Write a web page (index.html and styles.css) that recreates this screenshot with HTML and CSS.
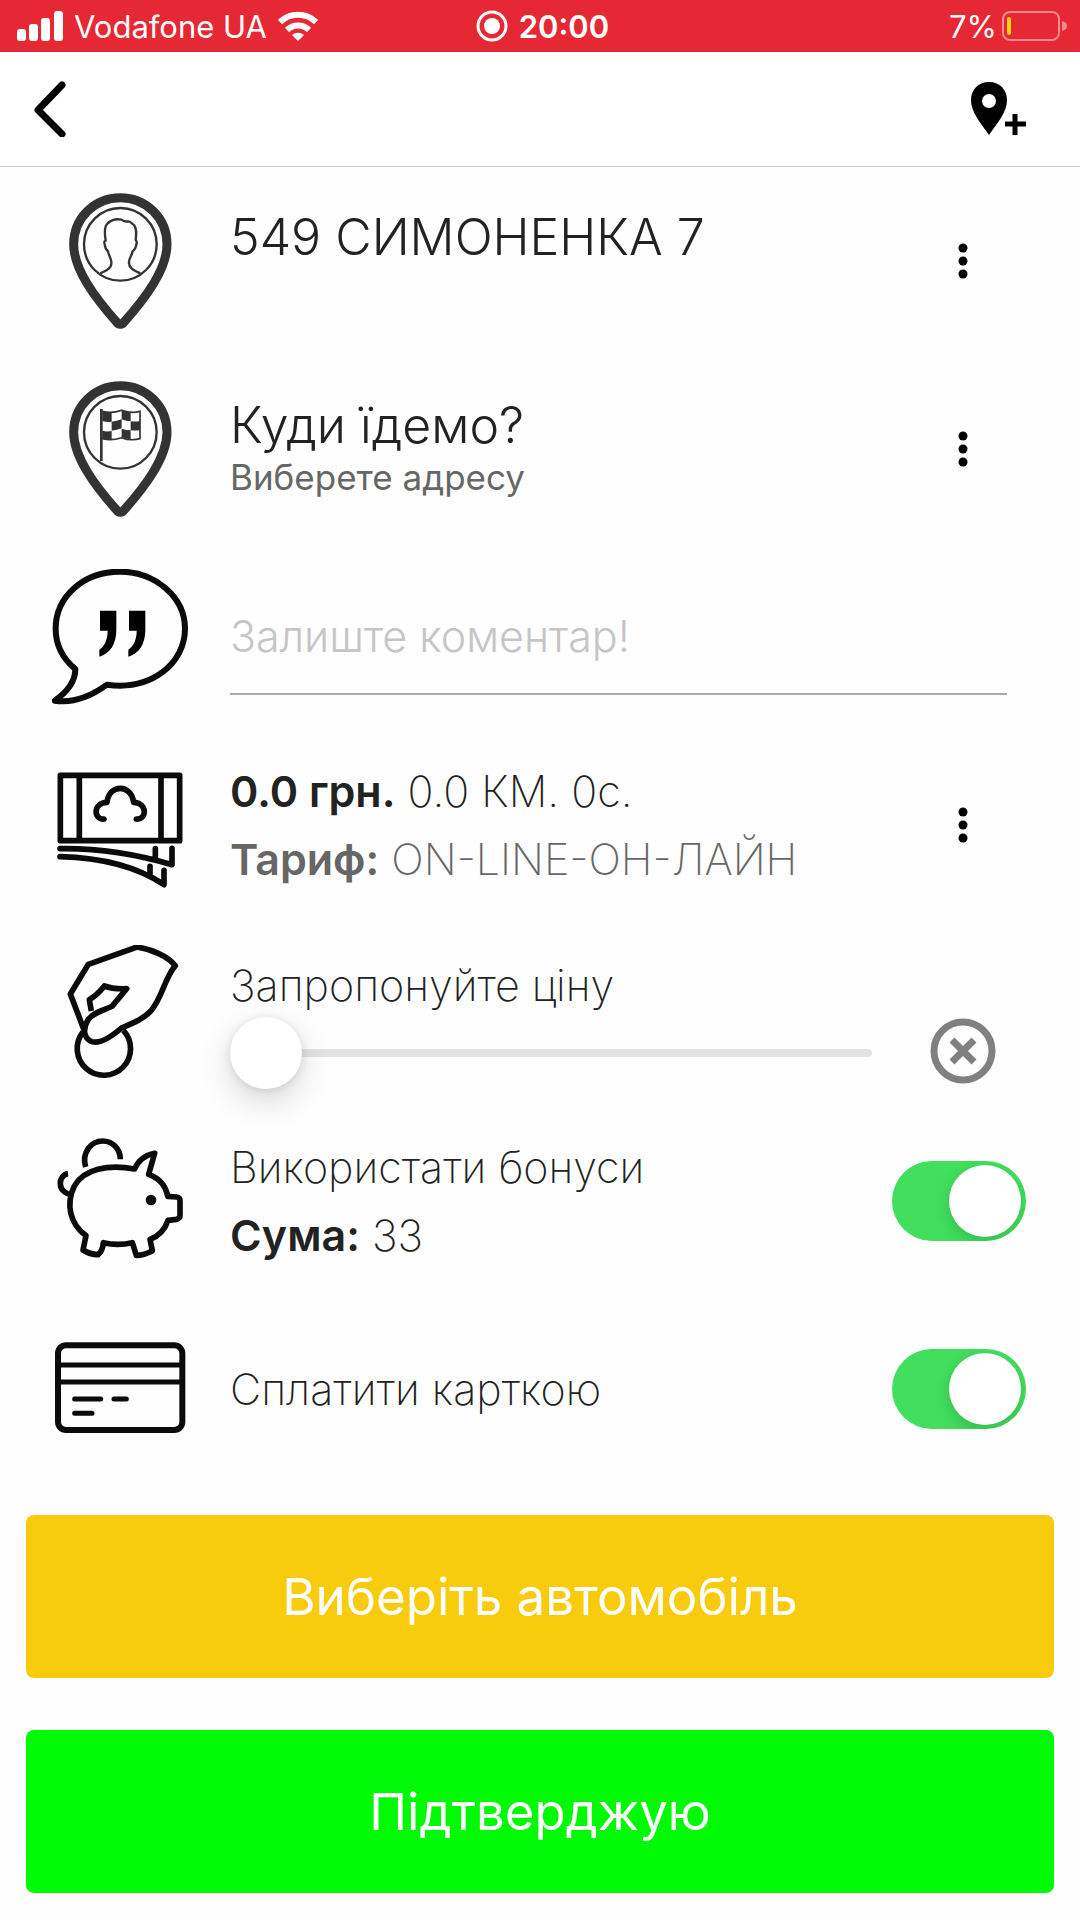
FILE: index.html
```html
<!DOCTYPE html>
<html lang="uk">
<head>
    <meta charset="UTF-8">
    <meta name="viewport" content="width=device-width, initial-scale=1.0">
    <title>Замовлення таксі</title>
    <link rel="stylesheet" href="styles.css">
</head>
<body>

<div class="status-bar">
    <div class="status-left">
        <svg class="signal" viewBox="0 0 46 30" width="46" height="30" fill="#fff">
            <rect x="0" y="18" width="9" height="12" rx="3"/>
            <rect x="12" y="13" width="9" height="17" rx="3"/>
            <rect x="24" y="7" width="9" height="23" rx="3"/>
            <rect x="37" y="0" width="9" height="30" rx="3"/>
        </svg>
        <span>Vodafone UA</span>
        <svg viewBox="0 0 40 30" width="40" height="30" fill="none" stroke="#fff" stroke-width="6">
            <path d="M2 11a26 26 0 0 1 36 0"/>
            <path d="M9 19a16 16 0 0 1 22 0"/>
            <path d="M20 30l-6-6a9 9 0 0 1 12 0z" fill="#fff" stroke="none"/>
        </svg>
    </div>
    <div class="status-time">
        <svg viewBox="0 0 32 32" width="32" height="32">
            <circle cx="16" cy="16" r="14" fill="none" stroke="#fff" stroke-width="3"/>
            <circle cx="16" cy="16" r="8" fill="#fff"/>
        </svg>
        <span>20:00</span>
    </div>
    <div class="status-right">
        <span>7%</span>
        <svg viewBox="0 0 66 30" width="66" height="30">
            <rect x="1" y="1" width="56" height="28" rx="7" fill="none" stroke="#f4898f" stroke-width="2"/>
            <rect x="5" y="6" width="4" height="18" rx="2" fill="#ffd60a"/>
            <path d="M60 10q5 1 5 5t-5 5z" fill="#f4898f"/>
        </svg>
    </div>
</div>

<header class="nav-bar">
    <button class="nav-button" aria-label="Назад">
        <svg viewBox="0 0 34 56" width="34" height="56" fill="none" stroke="#000" stroke-width="7" stroke-linecap="round" stroke-linejoin="round">
            <path d="M30 4L6 29l24 24"/>
        </svg>
    </button>
    <button class="nav-button" aria-label="Додати адресу">
        <svg viewBox="0 0 56 54" width="56" height="54">
            <path d="M19 0C8 0 1 8 1 18c0 12 9 22 18 35 9-13 18-23 18-35C37 8 30 0 19 0zm0 12a7 7 0 1 1 0 14 7 7 0 0 1 0-14z" fill-rule="evenodd"/>
            <path d="M45 32v21M35 42h21" stroke="#000" stroke-width="5"/>
        </svg>
    </button>
</header>

<main>
    <div class="row">
        <svg class="icon" viewBox="36 39 408 408" fill="none" stroke="#333">
            <path stroke-width="27" stroke-linejoin="round" d="M241 53C163 53 101 115 101 193c0 74 62 158 132 237q8 5 16 0c70-79 132-163 132-237C381 115 319 53 241 53z"/>
            <circle cx="241" cy="193" r="109" stroke-width="7"/>
            <path stroke-width="7" stroke-linejoin="round" d="M181 280C200 272 216 264 214 246C213 232 205 226 204 213C196 210 196 202 194 193Q191 183 197 182C193 158 192 138 204 129C216 119 231 116 244 119Q252 126 265 124C272 124 274 131 282 135C291 146 289 162 287 181Q292 184 289 194C287 203 286 210 278 213C276 227 268 232 267 246C265 264 282 271 301 280"/>
        </svg>
        <div class="text">
            <p class="address">549 СИМОНЕНКА 7</p>
            <p class="hint">&nbsp;</p>
        </div>
        <button class="action" aria-label="Меню">
            <svg viewBox="0 0 12 36" width="12" height="36"><circle cx="6" cy="5" r="4.500"/><circle cx="6" cy="18" r="4.500"/><circle cx="6" cy="31" r="4.500"/></svg>
        </button>
    </div>

    <div class="row">
        <svg class="icon" viewBox="36 39 408 408" fill="none" stroke="#333">
            <path stroke-width="27" stroke-linejoin="round" d="M241 53C163 53 101 115 101 193c0 74 62 158 132 237q8 5 16 0c70-79 132-163 132-237C381 115 319 53 241 53z"/>
            <circle cx="241" cy="193" r="109" stroke-width="7"/>
            <path stroke-width="8" d="M184 123v156"/>
            <path stroke-width="5" d="M187 130q28 8 58-3 28 10 55 3v82q-28 8-55-3-30 10-58 3"/>
            <path fill="#333" stroke="none" d="M187 130q14 4 28 2v29q-14 2-28-2zM245 127q13 6 27 6v27q-13 0-27-6zM215 161q15-2 30-7v27q-15 6-30 7zM272 160q14 2 28-1v27q-14 3-28 1zM187 188q14 4 28 1v26q-14 2-28-2zM245 182q13 5 27 5v27q-13-1-27-6z"/>
        </svg>
        <div class="text">
            <p class="address">Куди їдемо?</p>
            <p class="hint">Виберете адресу</p>
        </div>
        <button class="action" aria-label="Меню">
            <svg viewBox="0 0 12 36" width="12" height="36"><circle cx="6" cy="5" r="4.500"/><circle cx="6" cy="18" r="4.500"/><circle cx="6" cy="31" r="4.500"/></svg>
        </button>
    </div>

    <div class="row">
        <svg class="icon" viewBox="36 57 408 408" fill="none" stroke="#0b0b0b" stroke-width="18" stroke-linejoin="round">
            <path d="M240 65C130 65 47 140 47 236c0 48 22 90 59 121 0 38-26 70-62 95 56 9 106-11 157-48 134 19 234-65 234-168C435 140 345 65 240 65z"/>
            <path fill="#000" stroke="none" d="M180 182h49v57c0 44-20 72-51 81v-21c16-11 25-31 25-57h-23zM267 182h49v57c0 44-20 72-51 81v-21c16-11 25-31 25-57h-23z"/>
        </svg>
        <input class="comment" type="text" placeholder="Залиште коментар!" aria-label="Коментар">
    </div>

    <div class="row">
        <svg class="icon" viewBox="36 621 408 408" fill="none" stroke="#0b0b0b" stroke-width="17" stroke-linejoin="round" stroke-linecap="round">
            <path d="M61 676h358v196H61zM118 676v196M363 676v196"/>
            <path d="M192 807c-32 3-34-49 9-50 6-56 73-56 80 0 42 2 40 53 8 50"/>
            <path d="M60 896c120-2 230 17 336 48v-49M346 896v32M60 920c122 3 226 27 312 84v-43M330 949v24"/>
        </svg>
        <div class="text">
            <p class="line"><b>0.0 грн.</b> 0.0 КМ. 0с.</p>
            <p class="line tariff"><b>Тариф:</b> ON-LINE-ОН-ЛАЙН</p>
        </div>
        <button class="action" aria-label="Меню">
            <svg viewBox="0 0 12 36" width="12" height="36"><circle cx="6" cy="5" r="4.500"/><circle cx="6" cy="18" r="4.500"/><circle cx="6" cy="31" r="4.500"/></svg>
        </button>
    </div>

    <div class="row price-row">
        <svg class="icon" viewBox="36 75 408 408" fill="none" stroke="#0b0b0b" stroke-width="17" stroke-linejoin="round">
            <path d="M133 332L91 222l54-89 146-52c44 7 92 27 115 56-32 37-39 95-72 134-24 27-57 39-88 52-35 30-70 53-95 40-21-12-22-37-8-62 17-26 49-29 73-42l44-53c-24 1-46 0-67-8-13 17-26 30-45 41l6 34"/>
            <path d="M129 336a80 80 0 1 0 121-5"/>
        </svg>
        <div class="text">
            <label class="line" for="price">Запропонуйте ціну</label>
            <input class="slider" type="range" id="price" min="0" max="100" value="0">
        </div>
        <button class="action" aria-label="Скинути ціну">
            <svg viewBox="0 0 66 66" width="66" height="66" fill="none" stroke="#808080">
                <circle cx="33" cy="33" r="29" stroke-width="7"/>
                <path d="M22 22l22 22M44 22L22 44" stroke-width="7"/>
            </svg>
        </button>
    </div>

    <div class="row">
        <svg class="icon" viewBox="36 639 408 408" fill="none" stroke="#0b0b0b" stroke-width="17" stroke-linejoin="round">
            <path d="M284 747c-80-15-153 0-181 51-27 56-12 115 35 149l-9 43q20 13 45 14 14-11 16-36 43 10 87 0l12 38q23 0 48-14l-7-34c29-11 45-29 54-57l26-3q10-3 10-12v-44q0-10-10-11l-27-2c-6-33-26-55-57-66l18-63c-30 6-50 23-60 47z"/>
            <path d="M137 741c-13-44 17-78 51-78 30 0 53 23 53 55M84 761c-30 4-36 57 13 64"/>
            <circle cx="333" cy="840" r="16" fill="#0b0b0b" stroke="none"/>
        </svg>
        <div class="text">
            <label class="line" for="bonus">Використати бонуси</label>
            <p class="line"><b>Сума:</b> 33</p>
        </div>
        <input class="switch" type="checkbox" id="bonus" checked>
    </div>

    <div class="row">
        <svg class="icon" viewBox="36 33 408 408" fill="none" stroke="#0b0b0b" stroke-width="18" stroke-linecap="round">
            <rect x="54" y="106" width="373" height="254" rx="24"/>
            <path stroke-width="15" d="M58 165h366M58 216h366M104 267h78M222 267h37M104 310h52"/>
        </svg>
        <div class="text">
            <label class="line" for="card">Сплатити карткою</label>
        </div>
        <input class="switch" type="checkbox" id="card" checked>
    </div>
</main>

<div class="buttons">
    <button class="big-button car">Виберіть автомобіль</button>
    <button class="big-button confirm">Підтверджую</button>
</div>

</body>
</html>
```
FILE: styles.css
```css
* {
    box-sizing: border-box;
}

body {
    margin: 0;
    background-color: #fefefe;
    color: #222;
    font-family: Inter, Roboto, sans-serif;
}

p {
    margin: 0;
}

button {
    padding: 0;
    border: none;
    background: none;
    font-family: inherit;
    cursor: pointer;
}

svg {
    display: block;
    flex: none;
}

.status-bar {
    display: grid;
    grid-template-columns: 1fr auto 1fr;
    align-items: center;
    height: 52px;
    padding: 0 12px 0 17px;
    background-color: #e52833;
    color: #fff;
    font-size: 31px;
}

.status-left, .status-time, .status-right {
    display: flex;
    align-items: center;
    gap: 11px;
}

.status-time {
    font-weight: 600;
}

.status-right {
    justify-content: flex-end;
    gap: 5px;
}

.nav-bar {
    display: flex;
    justify-content: space-between;
    align-items: center;
    height: 115px;
    padding: 0 54px 0 32px;
    border-bottom: 1px solid #ccc;
    background-color: #fff;
}

.row {
    display: grid;
    grid-template-columns: 136px 1fr 134px;
    align-items: center;
    height: 188px;
    padding: 0 54px 0 52px;
}

.icon {
    width: 136px;
    height: 136px;
}

.text {
    margin: 0 20px 0 42px;
    white-space: nowrap;
}

.address {
    font-size: 50px;
    font-weight: 350;
    line-height: 56px;
}

.hint {
    color: #666;
    font-size: 35px;
    line-height: 48px;
}

.line {
    display: block;
    font-size: 43px;
    font-weight: 200;
    line-height: 68px;
}

.line b {
    font-weight: 600;
}

.tariff {
    color: #666;
}

.comment {
    grid-column: 2 / 4;
    height: 116px;
    margin: 0 19px 0 42px;
    padding: 0;
    border: none;
    border-bottom: 2px solid #aaa;
    background: none;
    font-family: inherit;
    font-size: 43px;
    font-weight: 300;
    outline: none;
}

.comment::placeholder {
    color: #c5c5c7;
    opacity: 1;
}

.action {
    display: flex;
    justify-content: center;
    align-items: center;
    justify-self: end;
    width: 126px;
    height: 80px;
}

.price-row {
    align-items: start;
    padding-top: 26px;
}

.price-row .text {
    margin-right: 0;
    padding-top: 8px;
    padding-right: 20px;
}

.price-row .action {
    margin-top: 66px;
}

.price-row .line {
    line-height: 64px;
}

.slider {
    display: block;
    width: 100%;
    height: 72px;
    margin: 0;
    appearance: none;
    background: none;
}

.slider::-webkit-slider-runnable-track {
    height: 8px;
    border-radius: 4px;
    background-color: #e3e3e5;
}

.slider::-webkit-slider-thumb {
    width: 72px;
    height: 72px;
    margin-top: -32px;
    border-radius: 50%;
    appearance: none;
    background-color: #fff;
    box-shadow: 0 1px 8px rgba(0, 0, 0, 0.1), 0 12px 32px rgba(0, 0, 0, 0.16);
}

.switch {
    width: 134px;
    height: 80px;
    margin: 0;
    padding: 4px 5px;
    border-radius: 40px;
    appearance: none;
    background-color: #d8d8d8;
    cursor: pointer;
    overflow: hidden;
}

.switch::before {
    content: "";
    display: block;
    width: 72px;
    height: 72px;
    border-radius: 50%;
    background-color: #fff;
    box-shadow: 0 6px 16px rgba(0, 0, 0, 0.16);
}

.switch:checked {
    background-color: #41df5d;
}

.switch:checked::before {
    margin-left: auto;
}

.buttons {
    display: flex;
    flex-direction: column;
    gap: 52px;
    padding: 32px 26px 26px;
}

.big-button {
    height: 163px;
    border-radius: 8px;
    color: #fff;
    font-size: 51px;
}

.car {
    background-color: #f8cc0c;
}

.confirm {
    background-color: #00f904;
}
```
